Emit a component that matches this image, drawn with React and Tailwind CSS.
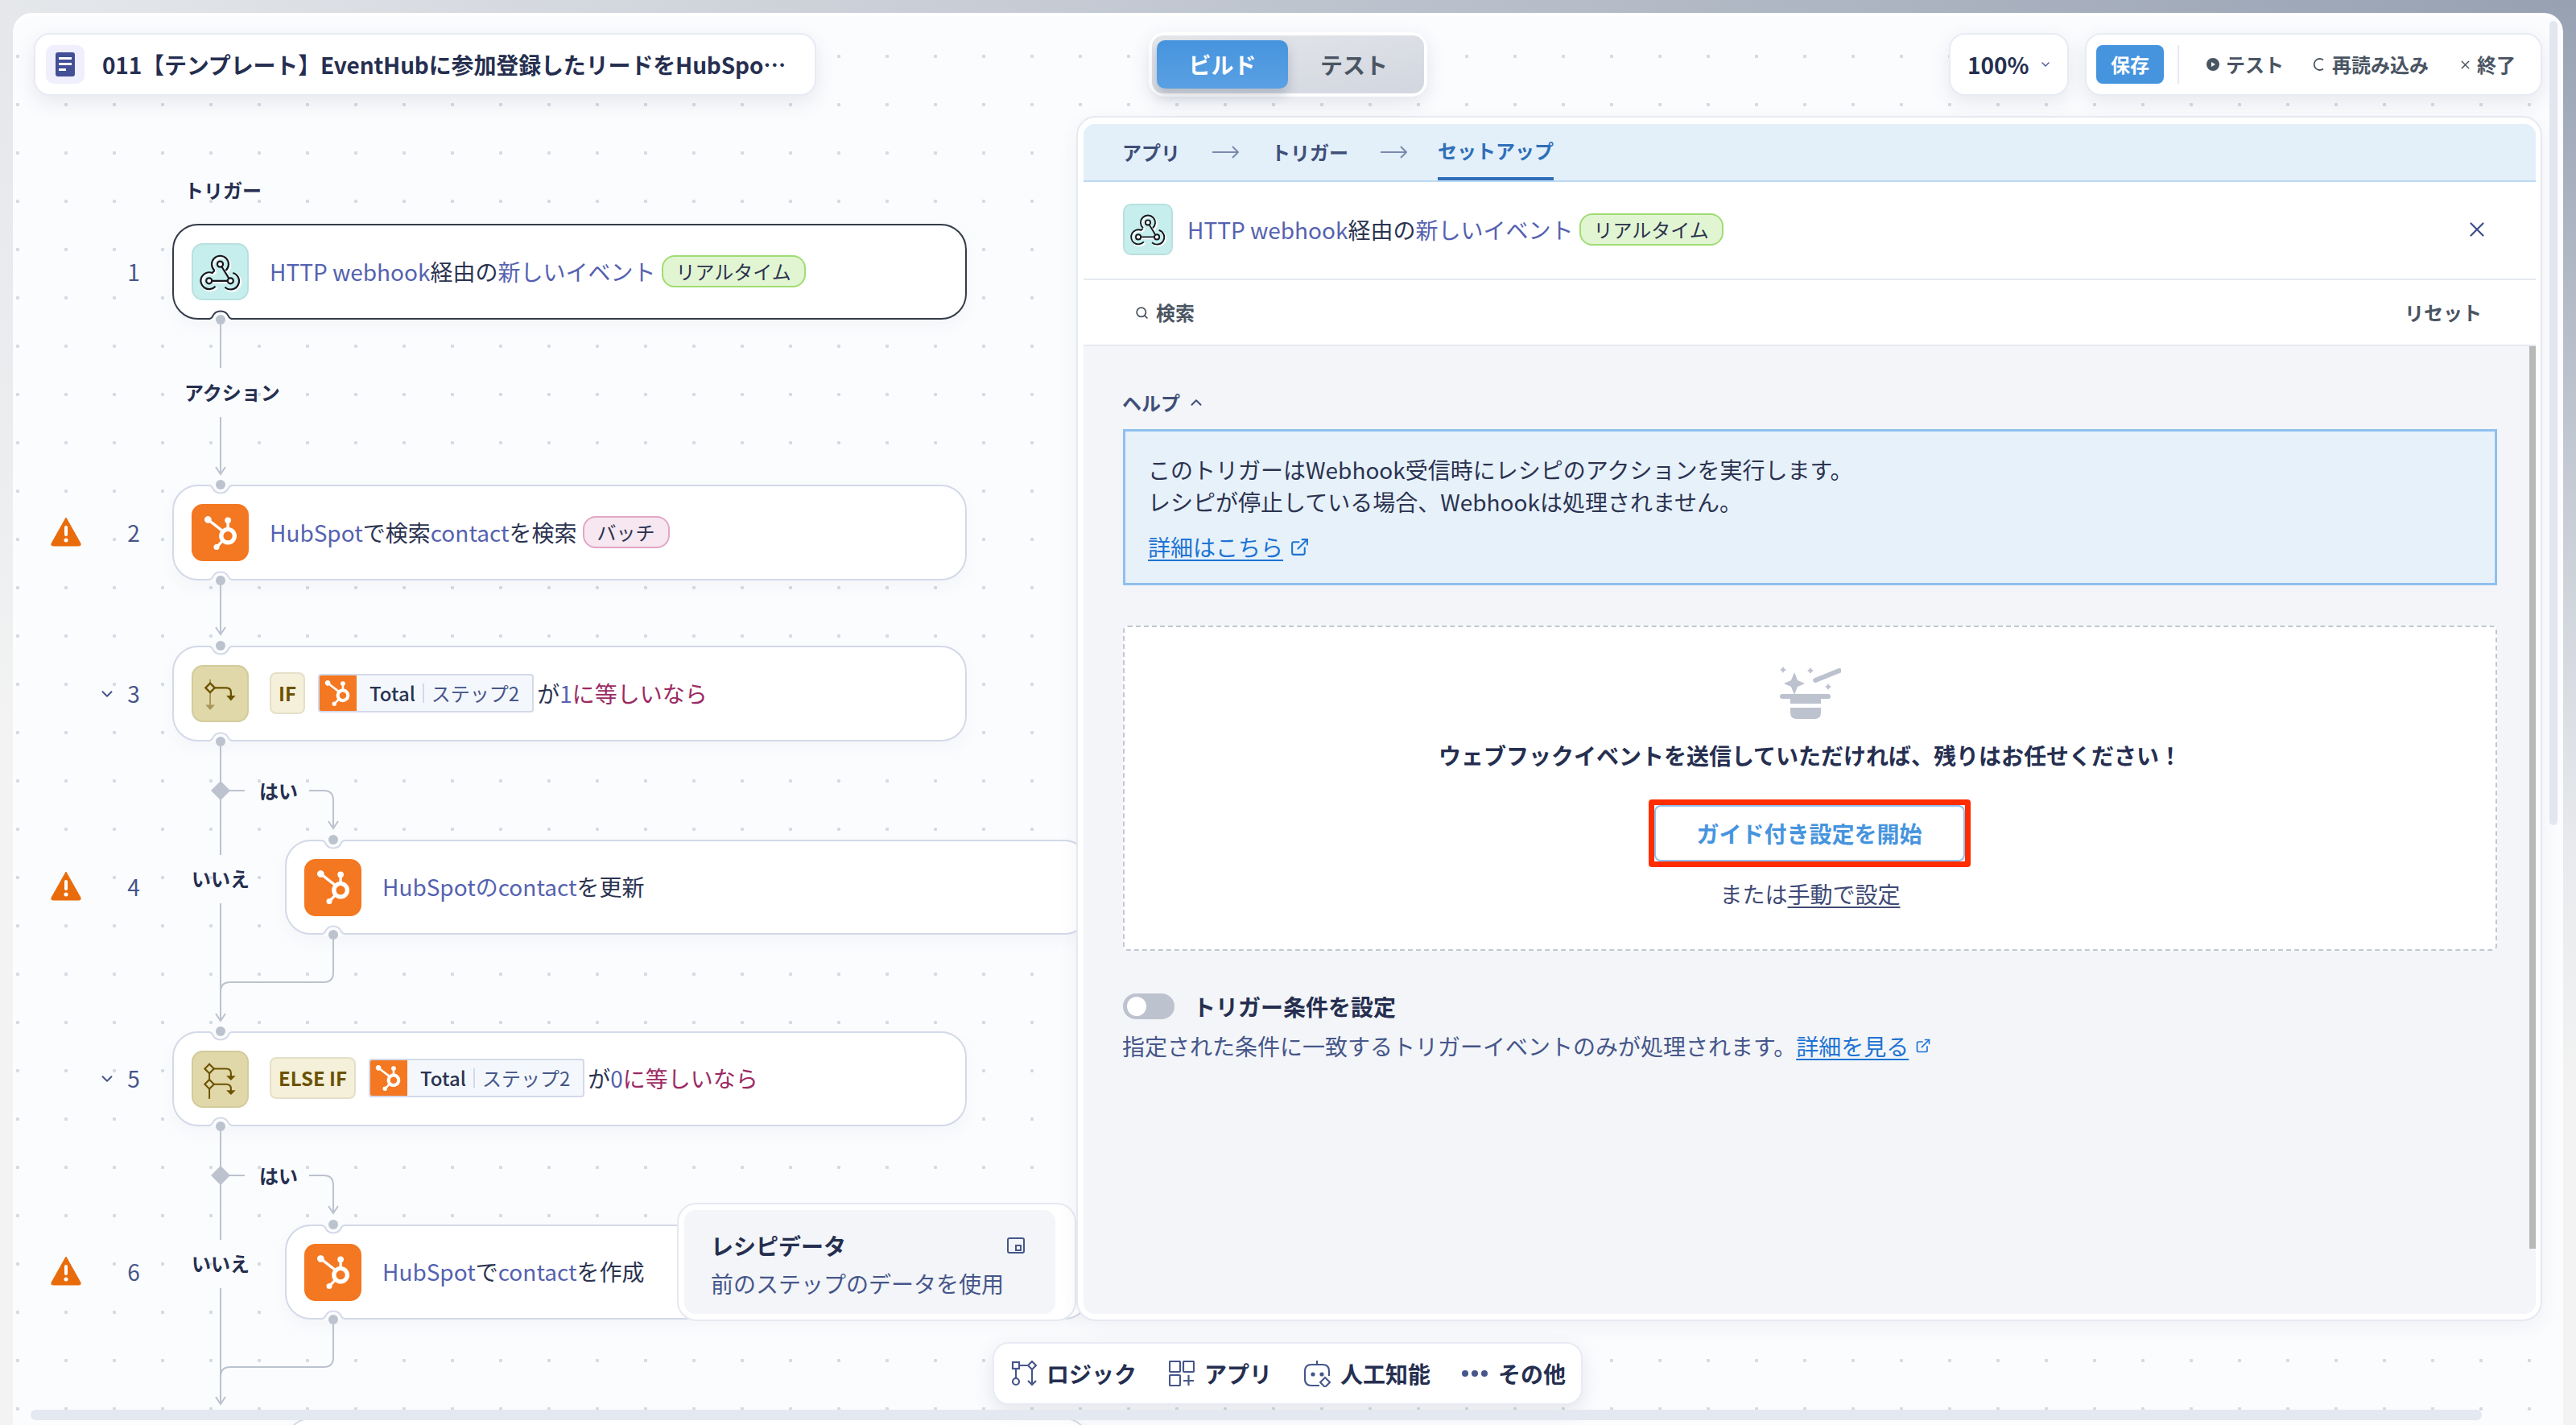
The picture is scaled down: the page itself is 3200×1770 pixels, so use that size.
import { ChevronDown, ChevronUp, Search, X, ExternalLink } from "lucide-react";
import { SiHubspot } from "react-icons/si";

const LINE = "#bcc2ce";
const CANVAS = "#fbfcfe";

const Blue = ({ children }) => <span className="text-[#5562b0]">{children}</span>;
const Red = ({ children }) => <span className="text-[#9b2a63]">{children}</span>;

const WEBHOOK_PATH =
  "M27 33A10.600 10.600 0 1 1 41 33M27 33L24 36A10.600 10.600 0 1 0 28 53M50 36A10.600 10.600 0 1 1 40 54M34 25L47 46M20 46H47";

const WebhookGlyph = ({ className }) => (
  <svg viewBox="0 0 68 70" className={className} fill="none">
    <path d={WEBHOOK_PATH} transform="translate(1.5 1.5)" stroke="#fff" strokeWidth="3.5" />
    <path d={WEBHOOK_PATH} stroke="#15181f" strokeWidth="2.2" />
    <g stroke="#15181f" strokeWidth="2.2" fill="#fff">
      <circle cx="34" cy="25" r="3.600" />
      <circle cx="20" cy="46" r="3.600" />
      <circle cx="47" cy="46" r="3.600" />
    </g>
  </svg>
);

const IfGlyph = () => (
  <svg viewBox="0 0 70 70" className="w-[70px] h-[70px]" fill="none">
    <path d="M22 16V50" stroke="#a8965a" strokeWidth="2" />
    <path d="M16 49H28L22 56Z" fill="#a8965a" />
    <path d="M22 21L28 27L22 33L16 27Z" stroke="#6b5200" strokeWidth="2.4" fill="#e0d8a8" />
    <path d="M28 27H43Q49 27 49 33V39" stroke="#6b5200" strokeWidth="2.4" />
    <path d="M43 37H55L49 44Z" fill="#6b5200" />
  </svg>
);

const ElseIfGlyph = () => (
  <svg viewBox="0 0 70 70" className="w-[70px] h-[70px]" fill="none">
    <path d="M21 15V61" stroke="#6b5200" strokeWidth="2" />
    <path d="M21 16L27 22L21 28L15 22Z" stroke="#6b5200" strokeWidth="2.2" fill="#e0d8a8" />
    <path d="M21 36L27 42L21 48L15 42Z" stroke="#6b5200" strokeWidth="2.2" fill="#e0d8a8" />
    <path d="M27 22H43Q49 22 49 28V32M27 42H43Q49 42 49 48V52" stroke="#6b5200" strokeWidth="2.2" />
    <path d="M43 31H55L49 37ZM43 50H55L49 56Z" fill="#6b5200" />
  </svg>
);

const WarningIcon = () => (
  <svg viewBox="0 0 40 38" className="w-[40px] h-[38px]">
    <path d="M20 2L38 34Q39 37 36 37H4Q1 37 2 34Z" fill="#e96c0c" stroke="#e96c0c" strokeLinejoin="round" strokeWidth="1" />
    <rect x="18" y="12" width="4" height="13" rx="2" fill="#fff" />
    <circle cx="20" cy="30" r="2.5" fill="#fff" />
  </svg>
);

const IconBox = ({ children, className }) => (
  <div className={`w-[71px] h-[71px] shrink-0 rounded-[14px] border-2 flex items-center justify-center ${className}`}>
    {children}
  </div>
);

const HubBox = () => (
  <IconBox className="bg-[#f47721] border-[#f47721]">
    <SiHubspot className="w-[42px] h-[42px] text-white" />
  </IconBox>
);

const Badge = ({ children, className }) => (
  <span className={`h-[40px] px-[16px] ml-[7px] rounded-[16px] border-2 flex items-center text-[24px] text-[#2b3350] ${className}`}>
    {children}
  </span>
);

const RealtimeBadge = () => <Badge className="bg-[#e2f5d2] border-[#9fdc72]">リアルタイム</Badge>;

const FieldPill = () => (
  <span className="h-[48px] flex items-center rounded-[4px] bg-[#f4f8fc] border-2 border-[#d3d9e8] text-[24px] overflow-hidden">
    <span className="w-[48px] h-[48px] -ml-[2px] bg-[#f47721] flex items-center justify-center">
      <SiHubspot className="w-[32px] h-[32px] text-white" />
    </span>
    <span className="ml-[16px] font-medium text-[#2b3350]">Total</span>
    <span className="mx-[9px] w-[2px] h-[24px] bg-[#d3d9e8]" />
    <span className="mr-[16px] text-[#46568a]">ステップ2</span>
  </span>
);

const Chip = ({ children }) => (
  <span className="h-[52px] px-[9px] mr-[16px] rounded-[8px] bg-[#f5f0d9] border-2 border-[#e4e0c8] flex items-center text-[24px] font-semibold text-[#6b5200]">
    {children}
  </span>
);

const steps = [
  {
    n: 1,
    row: "h-[119px]",
    selected: true,
    icon: (
      <IconBox className="bg-[#c6eeec] border-[#b9e0e0]">
        <WebhookGlyph className="w-[68px] h-[70px]" />
      </IconBox>
    ),
    body: (
      <>
        <Blue>HTTP webhook</Blue>経由の<Blue>新しいイベント</Blue>
        <RealtimeBadge />
      </>
    ),
  },
  {
    n: 2,
    row: "h-[119px] mt-[205px]",
    warn: true,
    icon: <HubBox />,
    body: (
      <>
        <Blue>HubSpot</Blue>で検索<Blue>contact</Blue>を検索
        <Badge className="bg-[#f6e7f0] border-[#e4a6c6]">バッチ</Badge>
      </>
    ),
  },
  {
    n: 3,
    row: "h-[119px] mt-[81px]",
    chevron: true,
    icon: (
      <IconBox className="bg-[#e0d8a8] border-[#d3cb9c]">
        <IfGlyph />
      </IconBox>
    ),
    body: (
      <>
        <Chip>IF</Chip>
        <FieldPill />
        <span className="ml-[4px]">が</span>
        <Blue>1</Blue>
        <Red>に等しいなら</Red>
      </>
    ),
  },
  {
    n: 4,
    row: "h-[118px] mt-[122px]",
    warn: true,
    nested: true,
    icon: <HubBox />,
    body: (
      <>
        <Blue>HubSpotのcontact</Blue>を更新
      </>
    ),
  },
  {
    n: 5,
    row: "h-[118px] mt-[120px]",
    chevron: true,
    icon: (
      <IconBox className="bg-[#e0d8a8] border-[#d3cb9c]">
        <ElseIfGlyph />
      </IconBox>
    ),
    body: (
      <>
        <Chip>ELSE IF</Chip>
        <FieldPill />
        <span className="ml-[4px]">が</span>
        <Blue>0</Blue>
        <Red>に等しいなら</Red>
      </>
    ),
  },
  {
    n: 6,
    row: "h-[118px] mt-[122px]",
    warn: true,
    nested: true,
    icon: <HubBox />,
    body: (
      <>
        <Blue>HubSpot</Blue>で<Blue>contact</Blue>を作成
      </>
    ),
  },
  { n: "", row: "h-[118px] mt-[122px]", nested: true },
];

const StepRow = ({ step }) => (
  <div className={`flex items-center ${step.row}`}>
    <div className="w-[198px] shrink-0 flex items-center">
      <div className="ml-[46px] w-[40px] h-[38px] -mt-[4px]">{step.warn && <WarningIcon />}</div>
      <div className="ml-[21px] w-[20px] flex justify-center">
        {step.chevron && <ChevronDown className="w-[22px] h-[22px] shrink-0 text-[#46568a]" strokeWidth={2.2} />}
      </div>
      <div className="ml-[13px] w-[20px] pb-[2px] text-center text-[28px] text-[#46568a]">{step.n}</div>
    </div>
    <div
      className={`h-full flex items-center pl-[22px] bg-white rounded-[32px] border-2 text-[28px] text-[#2b3350] whitespace-nowrap shadow-[0_8px_20px_rgba(60,70,100,0.04)] ${
        step.selected ? "border-[#343b4a]" : "border-[#d3d9e8]"
      } ${step.nested ? "ml-[140px] w-[1000px]" : "w-[987px]"}`}
    >
      {step.icon}
      {step.body && <div className="ml-[26px] pb-[2px] flex items-center">{step.body}</div>}
    </div>
  </div>
);

const Arrow = ({ x, y }) => <path d={`M${x - 6} ${y - 9}L${x} ${y}L${x + 6} ${y - 9}`} />;

const TopPort = ({ x, y }) => (
  <g>
    <rect x={x - 13} y={y - 2} width="26" height="4" fill={CANVAS} />
    <path d={`M${x - 15} ${y}Q${x - 11} ${y} ${x - 10} ${y + 3}A11 11 0 0 0 ${x + 10} ${y + 3}Q${x + 11} ${y} ${x + 15} ${y}`} fill={CANVAS} stroke="#d3d9e8" strokeWidth="2" />
    <circle cx={x} cy={y - 1} r="6" fill={LINE} stroke="none" />
  </g>
);

const BottomPort = ({ x, y, color = "#d3d9e8" }) => (
  <g>
    <rect x={x - 13} y={y - 2} width="26" height="4" fill={CANVAS} />
    <path d={`M${x - 15} ${y}Q${x - 11} ${y} ${x - 10} ${y - 3}A11 11 0 0 1 ${x + 10} ${y - 3}Q${x + 11} ${y} ${x + 15} ${y}`} fill={CANVAS} stroke={color} strokeWidth="2" />
    <circle cx={x} cy={y + 1} r="6" fill={LINE} stroke="none" />
  </g>
);

const Connectors = () => (
  <svg viewBox="0 0 3200 1770" className="absolute -left-[16px] -top-[16px] w-[3200px] h-[1770px] pointer-events-none" fill="none">
    <g stroke={LINE} strokeWidth="2">
      <path d="M274 397V457M274 518V589" />
      <Arrow x={274} y={589} />
      <path d="M274 721V788" />
      <Arrow x={274} y={788} />
      <path d="M274 921V1062M274 982H304M384 982H402Q414 982 414 994V1029" />
      <Arrow x={414} y={1029} />
      <path d="M274 1122V1268" />
      <Arrow x={274} y={1268} />
      <path d="M414 1161V1208Q414 1220 402 1220H286Q274 1220 274 1232" />
      <path d="M274 1399V1540M274 1460H304M384 1460H402Q414 1460 414 1472V1507" />
      <Arrow x={414} y={1507} />
      <path d="M274 1600V1744" />
      <Arrow x={274} y={1744} />
      <path d="M414 1639V1686Q414 1698 402 1698H286Q274 1698 274 1710" />
    </g>
    <path d="M274 970L286 982L274 994L262 982Z" fill={LINE} />
    <path d="M274 1448L286 1460L274 1472L262 1460Z" fill={LINE} />
    <BottomPort x={274} y={396} color="#343b4a" />
    <TopPort x={274} y={603} />
    <BottomPort x={274} y={720} />
    <TopPort x={274} y={803} />
    <BottomPort x={274} y={920} />
    <TopPort x={414} y={1044} />
    <BottomPort x={414} y={1160} />
    <TopPort x={274} y={1282} />
    <BottomPort x={274} y={1398} />
    <TopPort x={414} y={1522} />
    <BottomPort x={414} y={1638} />
  </svg>
);

const labelClass = "absolute text-[24px] text-[#262f50] font-semibold leading-[32px]";

const TabArrow = () => (
  <svg viewBox="0 0 33 16" className="w-[33px] h-[16px]" fill="none" stroke="#7c8ab0" strokeWidth="2">
    <path d="M0 8H32M25 1L32 8L25 15" />
  </svg>
);

const MagicHat = () => (
  <svg viewBox="0 0 76 65" className="w-[76px] h-[65px]" fill="#bcc2ce">
    <path d="M18 7L22 17L31 21L22 25L18 35L14 25L5 21L14 17Z" />
    <path d="M4 0L5.5 2.5L8 4L5.5 5.5L4 8L2.500 5.500L0 4L2.500 2.500Z" />
    <path d="M38 1L39.500 3.500L42 5L39.500 6.500L38 9L36.500 6.500L34 5L36.500 3.500Z" />
    <path d="M60 21L61.500 23.500L64 25L61.500 26.500L60 29L58.500 26.500L56 25L58.500 23.500Z" />
    <rect x="40" y="8" width="38" height="6" rx="3" transform="rotate(-22 59 11)" />
    <rect x="0" y="34" width="63" height="6" rx="3" />
    <rect x="13" y="38" width="38" height="8" />
    <path d="M13 51H51V57Q51 65 43 65H21Q13 65 13 57Z" />
  </svg>
);

const ToolbarItem = ({ icon, label, className }) => (
  <div className={`flex items-center gap-[12px] ${className}`}>
    {icon}
    <span>{label}</span>
  </div>
);

const PanelBody = () => (
  <div className="relative flex-1 bg-[#f3f5f8] pl-[49px] pr-[48px] pt-[56px]">
    <div className="absolute right-0 top-0 w-[8px] h-[1121px] bg-[#b8b8b8]" />
    <div className="flex items-center h-[28px] -ml-[1px] text-[24px] font-semibold text-[#3f4f78]">
      ヘルプ
      <ChevronUp className="ml-[9px] w-[22px] h-[22px]" strokeWidth={2.2} />
    </div>
    <div className="mt-[19px] h-[194px] pl-[28px] pt-[27px] bg-[#e7f1fa] border-[3px] border-[#8fc0ef] text-[28px] leading-[40px] text-[#2b3350]">
      <p>このトリガーはWebhook受信時にレシピのアクションを実行します。</p>
      <p>レシピが停止している場合、Webhookは処理されません。</p>
      <div className="mt-[16px] flex items-center text-[#1e74d3]">
        <span className="underline underline-offset-4">詳細はこちら</span>
        <ExternalLink className="ml-[8px] w-[25px] h-[25px]" strokeWidth={2} />
      </div>
    </div>
    <div className="mt-[50px] h-[404px] flex flex-col items-center bg-white border-2 border-dashed border-[#c2c7d3] rounded-[6px] pt-[49px]">
      <MagicHat />
      <p className="mt-[25px] text-[28px] leading-[40px] font-bold text-[#262f50]">ウェブフックイベントを送信していただければ、残りはお任せください！</p>
      <div className="mt-[35px] -ml-[2px] w-[400px] h-[84px] border-[7px] border-[#ff2d00] rounded-[4px]">
        <div className="h-full flex items-center justify-center bg-white border-2 border-[#8fc0ef] rounded-[8px] text-[28px] font-bold text-[#4694de]">
          ガイド付き設定を開始
        </div>
      </div>
      <p className="mt-[13px] text-[28px] leading-[40px] text-[#3f4a75]">
        または<span className="underline underline-offset-4">手動で設定</span>
      </p>
    </div>
    <div className="mt-[53px] flex items-center h-[32px]">
      <div className="w-[64px] h-[32px] rounded-full bg-[#bcc2ce] flex items-center pl-[5px]">
        <div className="w-[24px] h-[24px] rounded-full bg-white" />
      </div>
      <span className="ml-[23px] text-[28px] font-semibold text-[#262f50]">トリガー条件を設定</span>
    </div>
    <div className="mt-[13px] -ml-[1px] flex items-center text-[28px] leading-[40px] text-[#46568a]">
      指定された条件に一致するトリガーイベントのみが処理されます。
      <span className="underline underline-offset-4 text-[#1e74d3]">詳細を見る</span>
      <ExternalLink className="ml-[8px] w-[20px] h-[20px] text-[#1e74d3]" strokeWidth={2} />
    </div>
  </div>
);

const Panel = () => (
  <div className="absolute left-[1321px] top-[128px] w-[1821px] h-[1497px] bg-white border-2 border-[#e6e9f1] rounded-[24px] pt-[8px] pl-[7px] pr-[6px] pb-[7px] shadow-[0_8px_24px_rgba(60,70,100,0.06)]">
    <div className="h-full flex flex-col rounded-[14px] overflow-hidden">
      <div className="h-[72px] shrink-0 flex items-center pl-[48px] bg-[#e3f0fa] border-b-2 border-[#bcd9f2] text-[24px] font-semibold text-[#3f4f78]">
        <span>アプリ</span>
        <span className="ml-[40px]"><TabArrow /></span>
        <span className="ml-[40px]">トリガー</span>
        <span className="ml-[40px]"><TabArrow /></span>
        <span className="ml-[38px] h-full flex items-center border-b-4 border-[#2f6fb9] text-[#2f6fb9]">セットアップ</span>
      </div>
      <div className="h-[122px] shrink-0 flex items-center pl-[49px] pr-[58px] pb-[2px] bg-white border-b-2 border-[#e6e9f1] text-[28px] text-[#2b3350]">
        <div className="w-[62px] h-[64px] rounded-[10px] bg-[#c6eeec] border-2 border-[#b9e0e0] flex items-center justify-center">
          <WebhookGlyph className="w-[60px] h-[62px]" />
        </div>
        <div className="ml-[18px] flex items-center whitespace-nowrap">
          <Blue>HTTP webhook</Blue>経由の<Blue>新しいイベント</Blue>
          <RealtimeBadge />
        </div>
        <X className="ml-auto w-[30px] h-[30px] text-[#3f4f8a]" strokeWidth={1.8} />
      </div>
      <div className="h-[82px] shrink-0 flex items-center pl-[64px] pr-[67px] bg-white border-b-2 border-[#e6e9f1] text-[24px] font-semibold text-[#4a5563]">
        <Search className="w-[17px] h-[17px] mr-[9px]" strokeWidth={2.5} />
        検索
        <span className="ml-auto">リセット</span>
      </div>
      <PanelBody />
    </div>
  </div>
);

const TopBar = () => (
  <div className="absolute left-[26px] top-[24px] flex items-center">
    <div className="w-[972px] h-[78px] flex items-center pl-[13px] bg-white border-2 border-[#e9ebf4] rounded-[20px] shadow-[0_8px_24px_rgba(50,60,90,0.1)]">
      <div className="w-[48px] h-[48px] rounded-[10px] bg-[#efeffd] flex items-center justify-center">
        <svg viewBox="0 0 24 30" className="w-[24px] h-[30px]">
          <rect width="24" height="30" rx="3" fill="#434f96" />
          <rect x="4" y="6" width="16" height="3" fill="#fff" />
          <rect x="4" y="13" width="16" height="3" fill="#fff" />
          <rect x="4" y="20" width="9" height="3" fill="#fff" />
        </svg>
      </div>
      <span className="ml-[22px] text-[28px] font-semibold tracking-[-0.15px] text-[#262f50] whitespace-nowrap">011【テンプレート】EventHubに参加登録したリードをHubSpo⋯</span>
    </div>
    <div className="ml-[413px] w-[346px] h-[80px] p-[4px] bg-white rounded-[20px] shadow-[0_8px_24px_rgba(50,60,90,0.12)]">
      <div className="h-full flex items-center pl-[6px] rounded-[14px] bg-gradient-to-br from-[#e5e7eb] to-[#d2d6df] text-[28px] font-bold">
        <div className="w-[163px] h-[60px] flex items-center justify-center rounded-[10px] bg-gradient-to-b from-[#4694de] to-[#5aa0e3] text-white shadow-[0_8px_14px_rgba(60,70,100,0.25)]">ビルド</div>
        <div className="ml-[40px] text-[#4a5563]">テスト</div>
      </div>
    </div>
    <div className="ml-[648px] w-[149px] h-[78px] flex items-center pl-[21px] bg-white border-2 border-[#e9ebf4] rounded-[20px] text-[28px] font-semibold text-[#262f50] shadow-[0_8px_24px_rgba(50,60,90,0.1)]">
      100%
      <ChevronDown className="ml-[12px] w-[16px] h-[16px] text-[#46568a]" />
    </div>
    <div className="ml-[20px] w-[568px] h-[78px] flex items-center pl-[12px] bg-white border-2 border-[#e9ebf4] rounded-[20px] text-[24px] font-semibold text-[#4a5563] shadow-[0_8px_24px_rgba(50,60,90,0.1)]">
      <div className="w-[84px] h-[48px] flex items-center justify-center rounded-[8px] bg-[#4694de] font-bold text-white">保存</div>
      <div className="ml-[17px] w-[2px] h-[48px] bg-[#e6e9f1]" />
      <svg viewBox="0 0 18 18" className="ml-[33px] w-[18px] h-[18px]">
        <circle cx="9" cy="9" r="8" fill="#4a5563" />
        <path d="M7 6L12 9L7 12Z" fill="#fff" />
      </svg>
      <span className="ml-[7px]">テスト</span>
      <svg viewBox="0 0 16 20" className="ml-[36px] w-[16px] h-[20px]" fill="none" stroke="#4a5563" strokeWidth="1.8">
        <path d="M13 4.500A7 7 0 1 0 13 15.500" />
      </svg>
      <span className="ml-[8px]">再読み込み</span>
      <X className="ml-[37px] w-[17px] h-[17px]" strokeWidth={2} />
      <span className="ml-[6px]">終了</span>
    </div>
  </div>
);

const BottomToolbar = () => (
  <div className="absolute left-[1217px] top-[1651px] w-[733px] h-[78px] flex items-center pl-[21px] bg-white border-2 border-[#e9ebf4] rounded-[20px] text-[28px] font-semibold text-[#262f50] shadow-[0_8px_24px_rgba(50,60,90,0.12)]">
    <ToolbarItem
      label="ロジック"
      icon={
        <svg viewBox="0 0 32 32" className="w-[32px] h-[32px]" fill="none" stroke="#46568a" strokeWidth="2.2">
          <rect x="2" y="2" width="8" height="8" />
          <path d="M10 6H20M26 1L31 6L26 11L21 6ZM6 10V22M26 11V30M21 25L26 30L31 25" />
          <circle cx="6" cy="26" r="4" />
        </svg>
      }
    />
    <ToolbarItem
      className="ml-[40px]"
      label="アプリ"
      icon={
        <svg viewBox="0 0 32 32" className="w-[32px] h-[32px]" fill="none" stroke="#46568a" strokeWidth="2.2">
          <rect x="1" y="1" width="13" height="13" rx="1" />
          <rect x="18" y="1" width="13" height="13" rx="1" />
          <rect x="1" y="18" width="13" height="13" rx="1" />
          <path d="M18 25H31M24.500 18V31" />
        </svg>
      }
    />
    <ToolbarItem
      className="ml-[39px]"
      label="人工知能"
      icon={
        <svg viewBox="0 0 34 34" className="w-[34px] h-[34px]" fill="none" stroke="#46568a" strokeWidth="2.2">
          <path d="M17 1V6M20 32H10Q2 32 2 24V14Q2 6 10 6H24Q32 6 32 14V20" />
          <circle cx="12" cy="18" r="1.500" fill="#46568a" />
          <circle cx="23" cy="18" r="1.500" fill="#46568a" />
          <path d="M27 22L33 28L27 34L21 28Z" strokeWidth="2" />
        </svg>
      }
    />
    <ToolbarItem
      className="ml-[38px]"
      label="その他"
      icon={
        <svg viewBox="0 0 34 10" className="w-[34px] h-[10px]" fill="#46568a">
          <circle cx="5" cy="5" r="4" />
          <circle cx="17" cy="5" r="4" />
          <circle cx="29" cy="5" r="4" />
        </svg>
      }
    />
  </div>
);

export default function App() {
  return (
    <div lang="ja" className="w-[3200px] h-[1770px] overflow-hidden pt-[16px] px-[16px] bg-[radial-gradient(ellipse_3300px_1050px_at_100%_0%,#97a1b2_0%,#e8eaed_100%,#f3f3f3_130%)] font-['Noto_Sans_CJK_JP',sans-serif]">
      <div className="relative w-[3168px] h-[1754px] overflow-hidden rounded-t-[24px] bg-[#fbfcfe] bg-[radial-gradient(circle,#d6dae4_2px,transparent_2.500px)] bg-[size:60px_60px] bg-[position:-24px_24px] shadow-[inset_0_4px_0_#fff]">
        <div className="flex flex-col pt-[262px]">
          {steps.map((step) => (
            <StepRow key={step.n} step={step} />
          ))}
        </div>
        <Connectors />
        <div className={`${labelClass} left-[213px] top-[204px]`}>トリガー</div>
        <div className={`${labelClass} left-[213px] top-[455px]`}>アクション</div>
        <div className={`${labelClass} left-[306px] top-[950px]`}>はい</div>
        <div className={`${labelClass} left-[222px] top-[1059px]`}>いいえ</div>
        <div className={`${labelClass} left-[306px] top-[1428px]`}>はい</div>
        <div className={`${labelClass} left-[222px] top-[1537px]`}>いいえ</div>

        <div className="absolute left-[825px] top-[1478px] w-[496px] h-[147px] p-[7px] bg-white border-2 border-[#e6e9f1] rounded-[24px]">
          <div className="h-full w-[461px] pl-[33px] pt-[22px] pr-[38px] rounded-[14px] bg-[#f3f5f8]">
            <div className="flex items-center justify-between text-[28px] leading-[44px] font-bold text-[#262f50]">
              レシピデータ
              <svg viewBox="0 0 22 22" className="w-[22px] h-[22px]" fill="none" stroke="#46568a" strokeWidth="2">
                <rect x="1" y="2" width="20" height="18" rx="2" />
                <rect x="11" y="11" width="6" height="6" />
              </svg>
            </div>
            <div className="mt-[3px] text-[28px] leading-[44px] text-[#46568a]">前のステップのデータを使用</div>
          </div>
        </div>

        <Panel />
        <TopBar />
        <BottomToolbar />

        <div className="absolute right-[7px] top-[10px] w-[10px] h-[999px] rounded-full bg-[#e2e6ef]" />
        <div className="absolute left-[22px] top-[1735px] w-[3045px] h-[13px] rounded-full bg-[#e4e8f0]" />
      </div>
    </div>
  );
}
